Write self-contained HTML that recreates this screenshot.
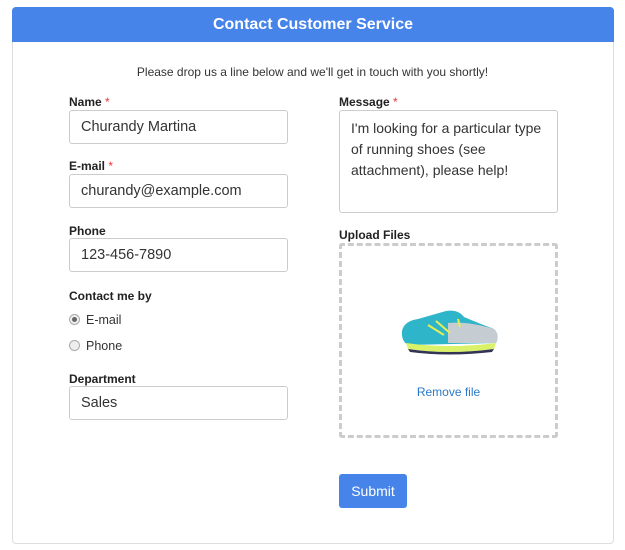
<!DOCTYPE html><html><head><style>
*{box-sizing:border-box;margin:0;padding:0}
body{width:625px;height:550px;background:#fff;font-family:"Liberation Sans",Arial,sans-serif;position:relative;overflow:hidden}
.card{position:absolute;left:12px;top:7px;width:602px;height:537px;border:1px solid #ddd;border-radius:4px}
.hd{position:absolute;left:12px;top:7px;width:602px;height:35px;background:#4684ea;border-radius:4px 4px 0 0;color:#fff;font-weight:bold;font-size:16px;text-align:center;line-height:35px}
.a{position:absolute}
.lbl{position:absolute;font-size:12px;font-weight:bold;color:#222}
.lbl i{color:#e33;font-style:normal;font-weight:normal}
.in{position:absolute;border:1px solid #ccc;border-radius:3px;font-size:14.5px;color:#333;padding-left:11px;line-height:33px}
.rd{position:absolute;font-size:12.5px;color:#333}
.rd span{display:inline-block;width:11px;height:11px;border:1px solid #aaa;border-radius:50%;background:#eee;vertical-align:-1px;margin-right:6px;position:relative}
.rd span.on:after{content:"";position:absolute;left:2px;top:2px;width:5px;height:5px;border-radius:50%;background:#666}
</style></head><body>
<div class="card"></div>
<div class="hd">Contact Customer Service</div>
<div class="a" style="left:0;width:625px;top:65px;text-align:center;font-size:12px;color:#333">Please drop us a line below and we'll get in touch with you shortly!</div>
<div class="lbl" style="left:69px;top:95px">Name <i>*</i></div>
<div class="in" style="left:69px;top:110px;width:219px;height:34px">Churandy Martina</div>
<div class="lbl" style="left:69px;top:159px">E-mail <i>*</i></div>
<div class="in" style="left:69px;top:174px;width:219px;height:34px">churandy@example.com</div>
<div class="lbl" style="left:69px;top:224px">Phone</div>
<div class="in" style="left:69px;top:238px;width:219px;height:34px">123-456-7890</div>
<div class="lbl" style="left:69px;top:289px">Contact me by</div>
<div class="rd" style="left:69px;top:313px"><span class="on"></span>E-mail</div>
<div class="rd" style="left:69px;top:339px"><span></span>Phone</div>
<div class="lbl" style="left:69px;top:372px">Department</div>
<div class="in" style="left:69px;top:386px;width:219px;height:34px">Sales</div>
<div class="lbl" style="left:339px;top:95px">Message <i>*</i></div>
<div class="in" style="left:339px;top:110px;width:219px;height:103px;line-height:21px;padding-top:7px;padding-right:6px;font-size:14px">I'm looking for a particular type of running shoes (see attachment), please help!</div>
<div class="lbl" style="left:339px;top:228px">Upload Files</div>
<div class="a" style="left:339px;top:243px;width:219px;height:195px;border:3px dashed #ccc;border-radius:3px"></div>
<svg class="a" style="left:398px;top:305px" width="104" height="52" viewBox="0 0 104 52">
<path d="M4 26 Q6 16 20 14 Q34 10 48 6 Q60 4 66 12 Q80 18 96 24 Q102 30 98 38 L10 40 Q3 36 4 26Z" fill="#2fb5c9"/>
<path d="M50 18 Q70 16 96 24 Q102 30 98 38 L50 38Z" fill="#c5ccd2"/>
<path d="M8 38 Q50 44 98 38 L96 44 Q50 50 10 44Z" fill="#d9f26a"/>
<path d="M10 44 Q50 50 96 44 L94 47 Q50 52 12 47Z" fill="#335"/>
<path d="M30 20 L46 30 M38 16 L52 28 M60 14 L62 22" stroke="#e5ee55" stroke-width="2" fill="none"/>
</svg>
<div class="a" style="left:339px;top:385px;width:219px;text-align:center;font-size:12px;color:#2a7ac8">Remove file</div>
<div class="a" style="left:339px;top:474px;width:68px;height:34px;background:#4684ea;border-radius:3px;color:#fff;font-size:14px;text-align:center;line-height:34px">Submit</div>
</body></html>
